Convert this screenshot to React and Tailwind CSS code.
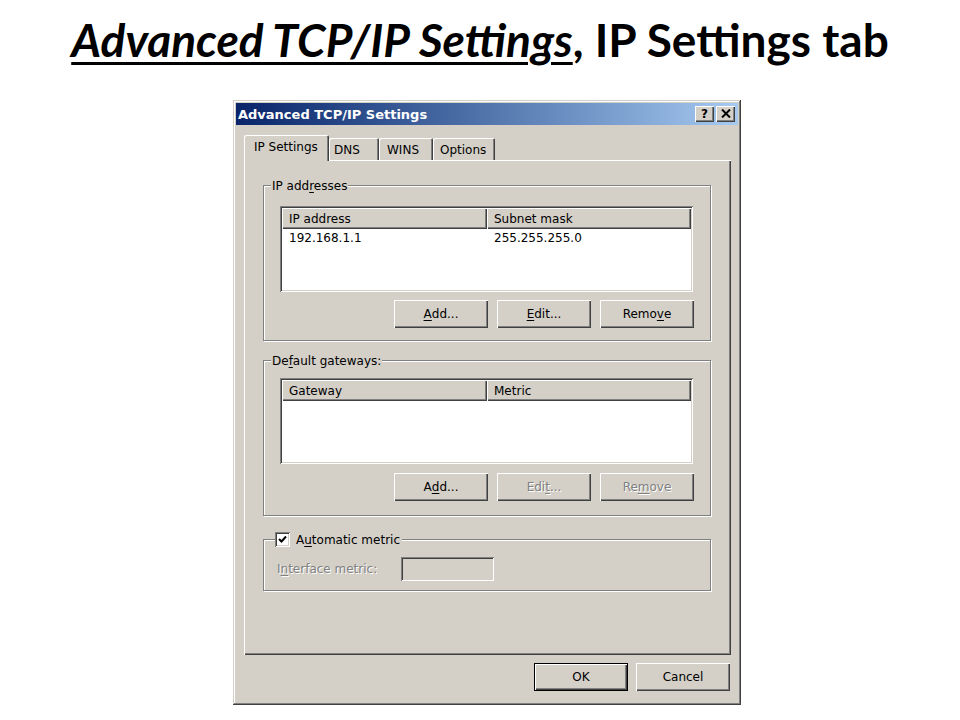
import React from "react";

const RAISED = "shadow-[inset_1px_1px_0_#fff,inset_-1px_-1px_0_#404040,inset_-2px_-2px_0_#808080]";
const SUNKEN = "shadow-[inset_1px_1px_0_#808080,inset_-1px_-1px_0_#fff,inset_2px_2px_0_#404040,inset_-2px_-2px_0_#d4d0c8]";
const DISABLED = "text-[#808080] [text-shadow:1px_1px_0_#fff]";

function U({ children }) {
  return <span className="underline underline-offset-[2px] decoration-1">{children}</span>;
}

function Btn({ children, disabled, isDefault }) {
  return (
    <button
      type="button"
      className={`w-[94px] h-[28px] flex items-center justify-center bg-[#d4d0c8] ${RAISED} ${
        isDefault ? "border border-black" : ""
      } ${disabled ? DISABLED : "text-black"}`}
    >
      {children}
    </button>
  );
}

function ListView({ col1, col2, row }) {
  return (
    <div className={`h-[86px] bg-white p-[2px] ${SUNKEN}`}>
      <div className="flex h-[21px]">
        <div className={`w-[205px] h-full bg-[#d4d0c8] pl-[7px] flex items-center ${RAISED}`}>{col1}</div>
        <div className={`flex-1 h-full bg-[#d4d0c8] pl-[7px] flex items-center ${RAISED}`}>{col2}</div>
      </div>
      {row && (
        <div className="flex h-[18px] items-center">
          <div className="w-[205px] pl-[7px]">{row[0]}</div>
          <div className="flex-1 pl-[7px]">{row[1]}</div>
        </div>
      )}
    </div>
  );
}

function Group({ label, className = "", children }) {
  return (
    <div
      className={`relative border border-[#808080] shadow-[inset_1px_1px_0_#fff,1px_1px_0_#fff] ${className}`}
    >
      <div className="absolute -top-[8px] left-[7px] bg-[#d4d0c8] px-[1px] leading-[14px] h-[15px] flex items-center">
        {label}
      </div>
      {children}
    </div>
  );
}

function Tab({ children, selected, w, pl }) {
  return (
    <div
      className={`bg-[#d4d0c8] rounded-t-[2px] flex items-center shadow-[inset_1px_1px_0_#fff,inset_-1px_0_0_#404040,inset_-2px_0_0_#808080] ${
        selected ? "h-[26px] -mb-[1px] relative z-10 pb-[2px]" : "h-[22px] pt-[1px]"
      } ${w} ${pl}`}
    >
      {children}
    </div>
  );
}

export default function App() {
  return (
    <div className="w-[960px] h-[720px] bg-white overflow-hidden">
      <div className="h-[100px] pt-[13px] text-center font-['Lato',sans-serif] font-bold text-[46px] leading-[54px] text-black">
        <span className="italic underline decoration-[3px] underline-offset-[5px]">Advanced TCP/IP Settings</span>
        <span>, IP Settings tab</span>
      </div>

      <div
        className="ml-[233px] w-[508px] h-[605px] bg-[#d4d0c8] p-[3px] font-['DejaVu_Sans',sans-serif] text-[12px] text-black shadow-[inset_-1px_-1px_0_#404040,inset_1px_1px_0_#d4d0c8,inset_-2px_-2px_0_#808080,inset_2px_2px_0_#fff]"
      >
        {/* Title bar */}
        <div className="h-[22px] bg-linear-to-r from-[#0a246a] to-[#a6caf0] flex items-center pl-[2px] pr-[3px]">
          <div className="flex-1 text-white font-bold text-[13px] leading-none">Advanced TCP/IP Settings</div>
          <div className="flex gap-[2px]">
            <div className={`w-[19px] h-[16px] bg-[#d4d0c8] ${RAISED} flex items-center justify-center font-bold text-[12px] leading-none pb-[1px]`}>
              ?
            </div>
            <div className={`w-[19px] h-[16px] bg-[#d4d0c8] ${RAISED} flex items-center justify-center pb-[1px]`}>
              <svg width="10" height="9" viewBox="0 0 10 9">
                <path d="M1 0.5 L9 8.5 M9 0.5 L1 8.5" stroke="#000" strokeWidth="2" />
              </svg>
            </div>
          </div>
        </div>

        {/* Body */}
        <div className="pl-[8px] pr-[7px] pt-[10px]">
          <div className="flex items-end h-[25px]">
            <Tab selected w="w-[85px]" pl="pl-[10px]">IP Settings</Tab>
            <Tab w="w-[50px]" pl="pl-[5px]">DNS</Tab>
            <Tab w="w-[54px]" pl="pl-[8px]">WINS</Tab>
            <Tab w="w-[62px]" pl="pl-[7px]">Options</Tab>
          </div>

          <div className={`h-[495px] bg-[#d4d0c8] pt-[25px] pl-[19px] pr-[20px] ${RAISED}`}>
            <Group
              label={
                <span>
                  IP add<U>r</U>esses
                </span>
              }
              className="pt-[20px] pl-[16px] pr-[17px] pb-[12px]"
            >
              <ListView col1="IP address" col2="Subnet mask" row={["192.168.1.1", "255.255.255.0"]} />
              <div className="flex justify-end gap-[9px] mt-[8px] -mr-[1px]">
                <Btn>
                  <U>A</U>dd...
                </Btn>
                <Btn>
                  <U>E</U>dit...
                </Btn>
                <Btn>
                  Remo<U>v</U>e
                </Btn>
              </div>
            </Group>

            <Group
              label={
                <span>
                  De<U>f</U>ault gateways:
                </span>
              }
              className="mt-[19px] pt-[17px] pl-[16px] pr-[17px] pb-[14px]"
            >
              <ListView col1="Gateway" col2="Metric" />
              <div className="flex justify-end gap-[9px] mt-[9px] -mr-[1px]">
                <Btn>
                  A<U>d</U>d...
                </Btn>
                <Btn disabled>
                  Edi<U>t</U>...
                </Btn>
                <Btn disabled>
                  Re<U>m</U>ove
                </Btn>
              </div>
            </Group>

            <div className="relative mt-[23px] border border-[#808080] shadow-[inset_1px_1px_0_#fff,1px_1px_0_#fff] pt-[17px] pb-[9px] pl-[13px]">
              <div className="absolute -top-[8px] left-[11px] bg-[#d4d0c8] pr-[2px] h-[15px] flex items-center gap-[6px]">
                <div className={`w-[15px] h-[15px] bg-white ${SUNKEN} flex items-center justify-center`}>
                  <svg width="9" height="9" viewBox="0 0 9 9">
                    <path d="M1 4 L3.5 6.5 L8 1.5" stroke="#000" strokeWidth="2" fill="none" />
                  </svg>
                </div>
                <span className="leading-[14px]">
                  A<U>u</U>tomatic metric
                </span>
              </div>
              <div className="flex items-center">
                <div className={`w-[124px] ${DISABLED}`}>
                  I<U>n</U>terface metric:
                </div>
                <div className={`w-[93px] h-[24px] bg-[#d4d0c8] ${SUNKEN}`} />
              </div>
            </div>
          </div>

          <div className="flex justify-end gap-[8px] mt-[8px] pr-[1px]">
            <Btn isDefault>OK</Btn>
            <Btn>Cancel</Btn>
          </div>
        </div>
      </div>
    </div>
  );
}
